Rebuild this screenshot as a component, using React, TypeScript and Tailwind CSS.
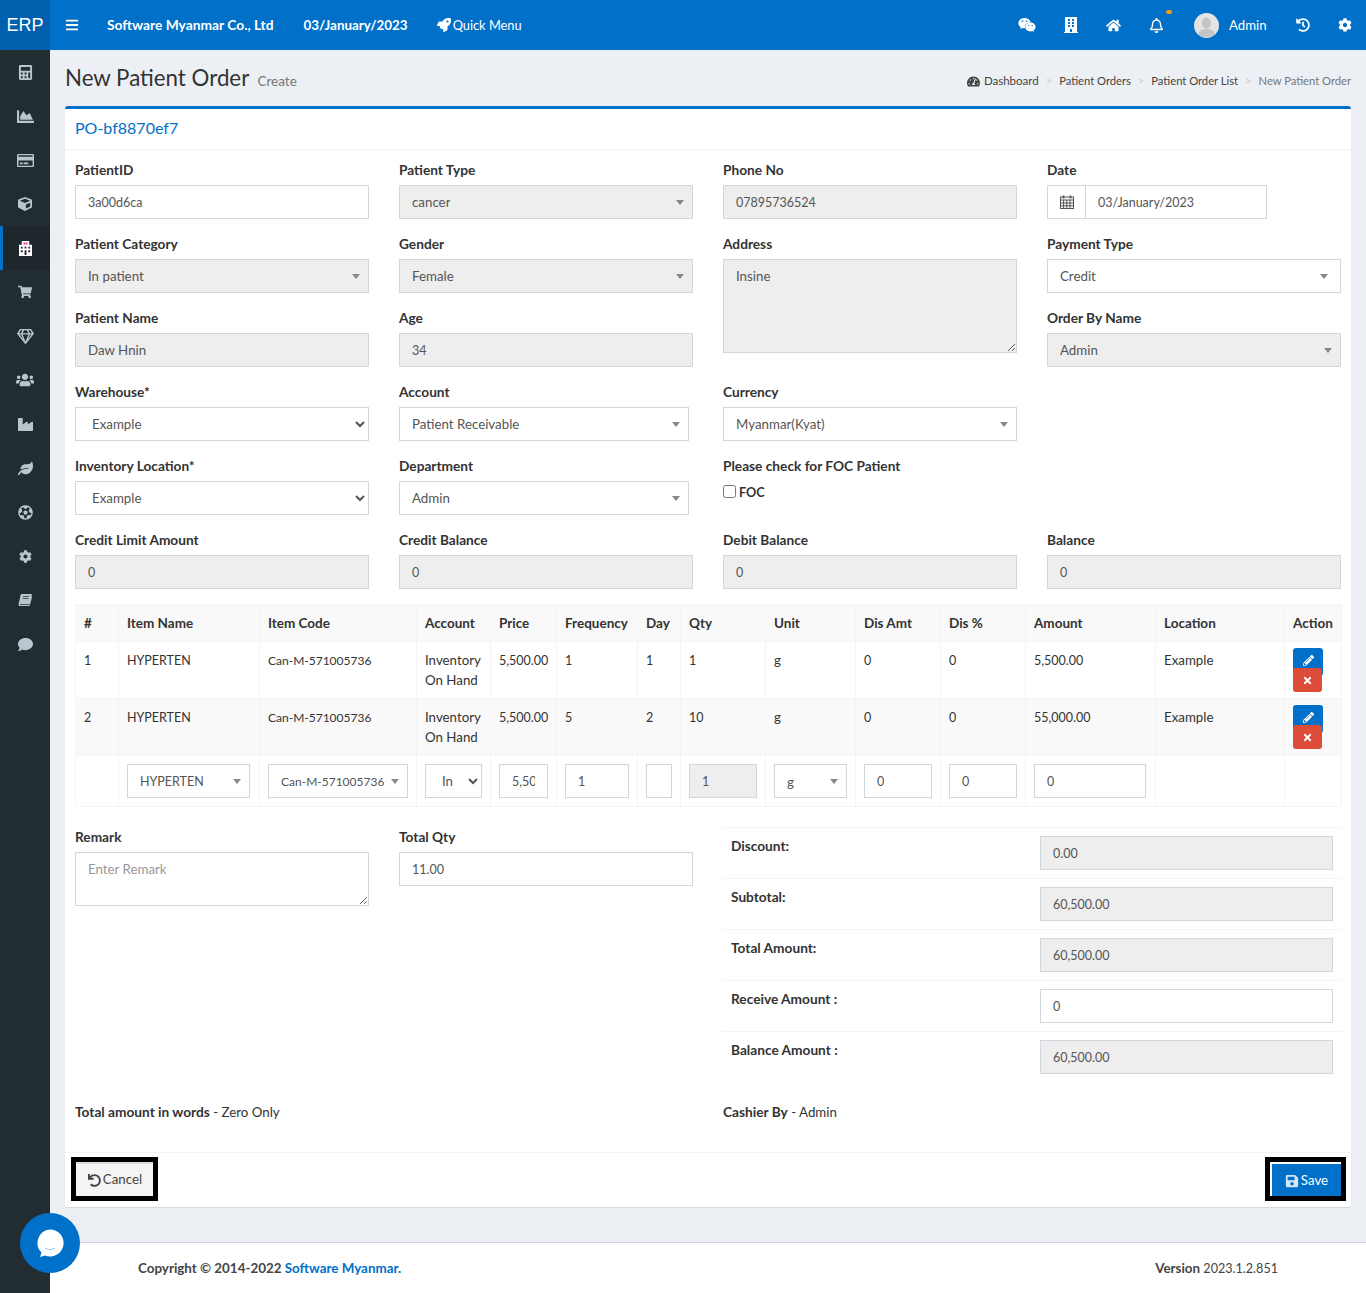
import React from "react";
import {
  FaCalculator, FaChartArea, FaRegCreditCard, FaCube, FaShoppingCart, FaRegGem, FaUsers, FaIndustry, FaLeaf,
  FaFutbol, FaCog, FaComment, FaBars, FaRocket, FaWeixin, FaBuilding, FaHome, FaRegBell, FaHistory,
  FaTachometerAlt, FaPencilAlt, FaTimes, FaUndo, FaSave,
} from "react-icons/fa";

const inputBase = "block h-[34px] border border-[#d2d6de] px-3 text-[#555] outline-none";

function isSmall(v: string) {
  return /^[\d]/.test(v) || v === "HYPERTEN" || v.startsWith("Can-M");
}

function fontFor(v: string) {
  if (v.startsWith("Can-M")) return "text-[12px]";
  return isSmall(v) ? "text-[12.5px]" : "text-[13.3px]";
}

function Label({ children }: { children: React.ReactNode }) {
  return <label className="mb-[5px] block h-5 text-[13.7px] font-bold leading-5 text-[#333]">{children}</label>;
}

function Input({ value, disabled, w = "w-full" }: { value: string; disabled?: boolean; w?: string }) {
  return (
    <input
      readOnly
      value={value}
      className={`${inputBase} ${w} ${fontFor(value)} min-w-0 ${disabled ? "bg-[#eeeeee]" : "bg-white"}`}
    />
  );
}

function Select2({ value, disabled, w = "w-full", pr = "pr-[8px]" }: { value: string; disabled?: boolean; w?: string; pr?: string }) {
  return (
    <div className={`flex h-[34px] items-center justify-between border border-[#d2d6de] pl-3 ${pr} text-[#555] ${fontFor(value)} ${w} ${disabled ? "bg-[#eeeeee]" : "bg-white"}`}>
      <span className="truncate pt-[1px]">{value}</span>
      <span className="h-0 w-0 shrink-0 border-x-[4px] border-t-[5px] border-x-transparent border-t-[#888]" />
    </div>
  );
}

function NativeSelect({ value, w = "w-full" }: { value: string; w?: string }) {
  return (
    <select className={`${inputBase} ${w} bg-white text-[13.3px]`} defaultValue={value}>
      <option>{value}</option>
    </select>
  );
}

function Field({ label, children, className = "" }: { label: string; children: React.ReactNode; className?: string }) {
  return (
    <div className={`pb-[15px] ${className}`}>
      <Label>{label}</Label>
      {children}
    </div>
  );
}

function HospitalIcon() {
  return (
    <svg viewBox="0 0 14 16" className="h-[15px] w-[13px]">
      <path d="M3 0h8v4h3v12H0V4h3z" fill="#fff" />
      <path d="M5 1h1v1h2V1h1v3H8V3H6v1H5z" fill="#d6248a" />
      <path d="M2 6h2v2H2zM6 6h2v2H6zM10 6h2v2h-2zM2 10h2v2H2zM10 10h2v2h-2zM6 10h2v5H6z" fill="#2a2140" />
    </svg>
  );
}

function BookIcon() {
  return (
    <svg viewBox="0 0 14 14" className="h-[14px] w-[14px]" fill="currentColor">
      <path d="M3.500 1h9.800c.4 0 .7.400.6.800l-2 8.600c-.1.500-.5.800-1 .8H2.300c-.6 0-.8.900 0 .9h9.200l2-8.300.5.300-2.100 8.500c-.1.300-.3.400-.6.400H2c-1.100 0-1.700-1-1.400-2.100L2.700 1.700c.1-.4.400-.7.800-.7z" />
      <path d="M5 3.300h6v.8H5zM4.600 5h6v.8h-6z" fill="#222d32" />
    </svg>
  );
}

function CalendarIcon() {
  return (
    <svg viewBox="0 0 14 14" className="h-[14px] w-[14px]" fill="none" stroke="#555" strokeWidth="1">
      <rect x="0.500" y="2" width="13" height="11.500" />
      <path d="M0.500 5h13M0.500 8h13M0.500 10.800h13M3.600 5v8.500M6.800 5v8.500M10 5v8.500" />
      <path d="M3.500 0.500v3M10.500 0.500v3" strokeWidth="1.800" />
    </svg>
  );
}

const sideItems: { el: React.ReactNode; active?: boolean }[] = [
  { el: <FaCalculator className="text-[15px]" /> },
  { el: <FaChartArea className="text-[17px]" /> },
  { el: <FaRegCreditCard className="text-[17px]" /> },
  { el: <FaCube className="text-[14px]" /> },
  { el: <HospitalIcon />, active: true },
  { el: <FaShoppingCart className="text-[14px]" /> },
  { el: <FaRegGem className="text-[17px]" /> },
  { el: <FaUsers className="text-[18px]" /> },
  { el: <FaIndustry className="text-[15px]" /> },
  { el: <FaLeaf className="text-[15px]" /> },
  { el: <FaFutbol className="text-[15px]" /> },
  { el: <FaCog className="text-[13px]" /> },
  { el: <BookIcon /> },
  { el: <FaComment className="text-[15px]" /> },
];

function Sidebar() {
  return (
    <aside className="w-[50px] shrink-0 bg-[#222d32]">
      <div className="flex h-[50px] items-center justify-center bg-[#0060ad] text-[18px] text-white [font-family:'Liberation_Sans',sans-serif]">ERP</div>
      {sideItems.map((it, i) => (
        <div
          key={i}
          className={`flex h-11 items-center justify-center ${it.active ? "border-l-[3px] border-[#0070c9] bg-[#1e282c] pr-[3px] text-white" : "text-[#b8c7ce]"}`}
        >
          {it.el}
        </div>
      ))}
    </aside>
  );
}

function Avatar() {
  return (
    <svg viewBox="0 0 25 25" className="h-[25px] w-[25px]">
      <circle cx="12.5" cy="12.5" r="12.5" fill="#e4e4e4" />
      <ellipse cx="12.5" cy="10" rx="4.5" ry="5.6" fill="#c4c4c4" />
      <path d="M4 21c1-4 5-5 8.500-5s7.500 1 8.500 5a12.500 12.500 0 0 1-17 0z" fill="#c4c4c4" />
    </svg>
  );
}

function Header() {
  return (
    <header className="flex h-[50px] items-center bg-[#0070c9] text-white">
      <FaBars className="ml-[15px] text-[14px]" />
      <span className="ml-[28px] text-[13.8px] font-bold">Software Myanmar Co., Ltd</span>
      <span className="ml-[30px] text-[13.4px] font-bold">03/January/2023</span>
      <FaRocket className="ml-[29px] text-[14px]" />
      <span className="ml-[2px] pt-[1px] text-[12.8px]">Quick Menu</span>
      <div className="ml-auto flex items-center pr-[14px]">
        <FaWeixin className="text-[18px]" />
        <FaBuilding className="ml-[27px] text-[16px]" />
        <FaHome className="ml-[27px] text-[15px]" />
        <div className="relative ml-[28px]">
          <FaRegBell className="text-[15px]" />
          <span className="absolute -right-[8px] -top-[8px] h-[4px] w-[6px] rounded-full bg-[#f39c12]" />
        </div>
        <div className="ml-[30px]"><Avatar /></div>
        <span className="ml-[10px] w-[38px] whitespace-nowrap pt-[1px] text-[13.2px]">Admin</span>
        <FaHistory className="ml-[29px] text-[14px]" />
        <FaCog className="ml-[28px] text-[14px]" />
      </div>
    </header>
  );
}

function Crumbs() {
  const sep = <span className="mx-[7px] text-[#ccc]">&gt;</span>;
  return (
    <div className="flex items-center pt-[6px] text-[11.2px] text-[#444]">
      <FaTachometerAlt className="mr-[4px] text-[13px]" />
      <span className="text-[11.5px]">Dashboard</span>{sep}
      <span>Patient Orders</span>{sep}
      <span>Patient Order List</span>{sep}
      <span className="text-[#777]">New Patient Order</span>
    </div>
  );
}

const rows = [
  ["1", "HYPERTEN", "Can-M-571005736", "Inventory On Hand", "5,500.00", "1", "1", "1", "g", "0", "0", "5,500.00", "Example"],
  ["2", "HYPERTEN", "Can-M-571005736", "Inventory On Hand", "5,500.00", "5", "2", "10", "g", "0", "0", "55,000.00", "Example"],
];
const heads = ["#", "Item Name", "Item Code", "Account", "Price", "Frequency", "Day", "Qty", "Unit", "Dis Amt", "Dis %", "Amount", "Location", "Action"];
const colWidths = [43, 141, 157, 74, 66, 81, 43, 85, 90, 85, 85, 130, 129, 57];

function ItemsTable() {
  const td = "border border-[#f4f4f4] px-2 py-2 align-top";
  const tdSmall = "border border-[#f4f4f4] px-2 pb-[7px] pt-[9px] align-top";
  return (
    <table className="w-[1266px] table-fixed border-collapse leading-5 text-[#333]">
      <colgroup>
        {colWidths.map((w, i) => <col key={i} style={{ width: w }} />)}
      </colgroup>
      <thead>
        <tr className="bg-[#f9f9f9]">
          {heads.map((h) => <th key={h} className={`${td} whitespace-nowrap text-left text-[13.5px] font-bold`}>{h}</th>)}
        </tr>
      </thead>
      <tbody>
        {rows.map((r, i) => (
          <tr key={i} className={i === 1 ? "bg-[#f9f9f9]" : "bg-white"}>
            {r.map((c, j) => <td key={j} className={`${isSmall(c) ? tdSmall : td} ${fontFor(c)}`}>{c}</td>)}
            <td className="border border-[#f4f4f4] px-2 py-[6px] align-top">
              <div className="flex h-[28px] w-[30px] items-start justify-center rounded-[3px] bg-[#0070c9] pt-[7px] text-[11px] text-white"><FaPencilAlt /></div>
              <div className="relative -mt-2 flex h-[24px] w-[29px] items-center justify-center rounded-[3px] bg-[#dd4b39] text-[11px] text-white"><FaTimes /></div>
            </td>
          </tr>
        ))}
        <tr className="bg-white">
          <td className={td} />
          <td className={td}><Select2 value="HYPERTEN" w="w-[123px]" /></td>
          <td className={td}><Select2 value="Can-M-571005736" w="w-[140px]" /></td>
          <td className={td}><NativeSelect value="Inventory On Hand" w="w-[57px]" /></td>
          <td className={td}><Input value="5,500.00" w="w-[49px]" /></td>
          <td className={td}><Input value="1" w="w-[64px]" /></td>
          <td className={td}><Input value="" w="w-[26px]" /></td>
          <td className={td}><Input value="1" disabled w="w-[68px]" /></td>
          <td className={td}><Select2 value="g" w="w-[73px]" /></td>
          <td className={td}><Input value="0" w="w-[68px]" /></td>
          <td className={td}><Input value="0" w="w-[68px]" /></td>
          <td className={td}><Input value="0" w="w-[112px]" /></td>
          <td className={td} />
          <td className={td} />
        </tr>
      </tbody>
    </table>
  );
}

function SummaryRow({ label, value, disabled }: { label: string; value: string; disabled?: boolean }) {
  return (
    <div className="flex h-[51px] border-t border-[#f4f4f4] pl-2 pr-2 pt-2">
      <div className="w-[309px] text-[13.7px] font-bold leading-5 text-[#333]">{label}</div>
      <Input value={value} disabled={disabled} w="w-[293px]" />
    </div>
  );
}

export default function App() {
  return (
    <div className="relative flex min-h-[1293px] w-[1366px] [font-family:Lato,'Noto_Sans',sans-serif]">
      <Sidebar />
      <div className="flex min-w-0 flex-1 flex-col bg-[#ecf0f5]">
        <Header />
        <main className="flex-1 px-[15px]">
          <div className="flex h-[56px] items-center justify-between">
            <h1 className="text-[22.3px] leading-none text-[#333]">
              New Patient Order <small className="ml-[3px] text-[13.5px] text-[#777]">Create</small>
            </h1>
            <Crumbs />
          </div>
          <section className="rounded-[3px] border-t-[3px] border-[#0070c9] bg-white shadow-[0_1px_1px_rgba(0,0,0,0.1)]">
            <div className="flex h-[41px] items-center border-b border-[#f4f4f4] px-[10px] pb-[2px] text-[16px] text-[#0070c9]">PO-bf8870ef7</div>
            <div className="px-[10px] pt-[10px]">
              <div className="grid grid-cols-4 gap-x-[30px]">
                <Field label="PatientID"><Input value="3a00d6ca" /></Field>
                <Field label="Patient Type"><Select2 value="cancer" disabled /></Field>
                <Field label="Phone No"><Input value="07895736524" disabled /></Field>
                <Field label="Date">
                  <div className="flex w-[220px]">
                    <span className="flex h-[34px] w-[38px] shrink-0 items-center justify-center border border-r-0 border-[#d2d6de]"><CalendarIcon /></span>
                    <Input value="03/January/2023" />
                  </div>
                </Field>

                <Field label="Patient Category"><Select2 value="In patient" disabled /></Field>
                <Field label="Gender"><Select2 value="Female" disabled /></Field>
                <Field label="Address" className="row-span-2">
                  <textarea readOnly value="Insine" className="block h-[94px] w-full border border-[#d2d6de] bg-[#eeeeee] px-3 py-[7px] text-[13.3px] text-[#555] outline-none" />
                </Field>
                <Field label="Payment Type"><Select2 value="Credit" pr="pr-[12px]" /></Field>

                <Field label="Patient Name"><Input value="Daw Hnin" disabled /></Field>
                <Field label="Age"><Input value="34" disabled /></Field>
                <Field label="Order By Name"><Select2 value="Admin" disabled /></Field>

                <Field label="Warehouse*"><NativeSelect value="Example" /></Field>
                <Field label="Account"><Select2 value="Patient Receivable" w="w-[290px]" /></Field>
                <Field label="Currency"><Select2 value="Myanmar(Kyat)" /></Field>
                <div />

                <Field label="Inventory Location*"><NativeSelect value="Example" /></Field>
                <Field label="Department"><Select2 value="Admin" w="w-[290px]" /></Field>
                <div className="pb-[15px]">
                  <Label>Please check for FOC Patient</Label>
                  <div className="flex items-center gap-[3px]">
                    <input type="checkbox" className="m-0 h-[13px] w-[13px]" />
                    <span className="pt-[2px] text-[12.7px] font-bold text-[#333]">FOC</span>
                  </div>
                </div>
                <div />

                <Field label="Credit Limit Amount"><Input value="0" disabled /></Field>
                <Field label="Credit Balance"><Input value="0" disabled /></Field>
                <Field label="Debit Balance"><Input value="0" disabled /></Field>
                <Field label="Balance"><Input value="0" disabled /></Field>
              </div>

              <ItemsTable />

              <div className="mt-5 grid grid-cols-4 gap-x-[30px]">
                <div>
                  <Label>Remark</Label>
                  <textarea readOnly placeholder="Enter Remark" className="block h-[54px] w-full border border-[#d2d6de] bg-white px-3 py-[7px] text-[13.3px] text-[#555] outline-none placeholder:text-[#999]" />
                </div>
                <div>
                  <Label>Total Qty</Label>
                  <Input value="11.00" />
                </div>
                <div className="col-span-2">
                  <SummaryRow label="Discount:" value="0.00" disabled />
                  <SummaryRow label="Subtotal:" value="60,500.00" disabled />
                  <SummaryRow label="Total Amount:" value="60,500.00" disabled />
                  <SummaryRow label="Receive Amount :" value="0" />
                  <SummaryRow label="Balance Amount :" value="60,500.00" disabled />
                </div>
              </div>

              <div className="mt-5 grid grid-cols-2 gap-x-[30px] pb-[30px] text-[13.3px] leading-5 text-[#333]">
                <div><b className="text-[13.7px]">Total amount in words</b> - Zero Only</div>
                <div><b className="text-[13.7px]">Cashier By</b> - Admin</div>
              </div>
            </div>
            <div className="flex items-center justify-between border-t border-[#f4f4f4] pb-[11px] pl-[11px] pr-[10px] pt-[9px]">
              <button className="flex h-[34px] w-[77px] items-center justify-center gap-[2px] border border-t-2 border-[#f4f4f4] border-t-[#dddddd] bg-[#f4f4f4] pl-[1px] pt-[1px] text-[13.3px] text-[#444] outline-[5px] outline-black">
                <FaUndo className="text-[13px]" /> Cancel
              </button>
              <button className="flex h-[34px] w-[71px] items-center justify-center gap-[2px] border-l-2 border-t-2 border-white bg-[#0070c9] pt-[1px] text-[13.3px] text-white outline-[5px] outline-black">
                <FaSave className="text-[14px] text-[#d8e6f5]" /> Save
              </button>
            </div>
          </section>
        </main>
        <footer className="mt-[35px] flex h-[51px] items-center justify-between border-t border-[#d2d6de] bg-white px-[88px] text-[#444]">
          <div className="text-[13.4px] font-bold">Copyright © 2014-2022 <span className="text-[#0070c9]">Software Myanmar.</span></div>
          <div className="text-[12.6px]"><b className="text-[13.4px]">Version</b> 2023.1.2.851</div>
        </footer>
      </div>
      <div className="absolute left-5 top-[1213px] flex h-[60px] w-[60px] items-center justify-center rounded-full bg-[#0070c9]">
        <svg viewBox="0 0 30 30" className="h-[30px] w-[30px]">
          <path d="M15 1.500a13.500 13.500 0 1 1-5 26l-5 1.500 1.500-4.500A13.500 13.500 0 0 1 15 1.500z" fill="#fff" />
          <path d="M9.500 19.500c3 2 8 2 11 0-.8 2.500-10.200 2.500-11 0z" fill="#0070c9" />
        </svg>
      </div>
    </div>
  );
}
